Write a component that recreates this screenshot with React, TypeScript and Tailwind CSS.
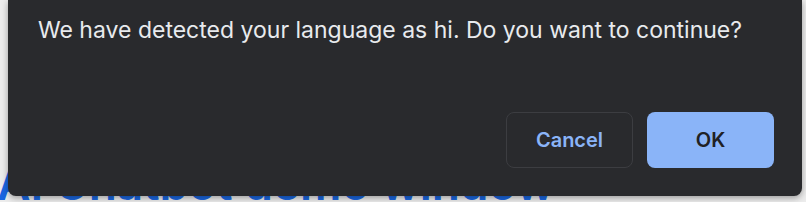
import React from 'react';

const font = { fontFamily: 'Inter, "Liberation Sans", sans-serif' };

export default function App() {
  return (
    <div className="relative h-[202px] w-full overflow-hidden bg-[#ececec]" style={font}>
      {/* page content behind the dialog */}
      <h1 className="ml-[-3px] mt-[160px] whitespace-nowrap text-[46px] font-semibold leading-[46px] text-[#1a66e0]">
        AI Chatbot demo window
      </h1>

      {/* alert dialog */}
      <div className="absolute left-2 right-1 top-0 flex h-[196px] flex-col rounded-b-lg bg-[#292a2d] pl-[30px] pr-[28px] pt-4 pb-[28px] shadow-[0_2px_6px_rgba(0,0,0,0.35)]">
        <p className="text-[23px] leading-[28px] text-[#e8eaed]">
          We have detected your language as hi. Do you want to continue?
        </p>
        <div className="mt-auto flex justify-end gap-[14px]">
          <button className="h-14 w-[127px] rounded-lg border border-[#3c3d41] text-[20px] font-semibold text-[#8ab4f8]">
            Cancel
          </button>
          <button className="h-14 w-[127px] rounded-lg bg-[#8ab4f8] text-[20px] font-semibold text-[#202124]">
            OK
          </button>
        </div>
      </div>
    </div>
  );
}
